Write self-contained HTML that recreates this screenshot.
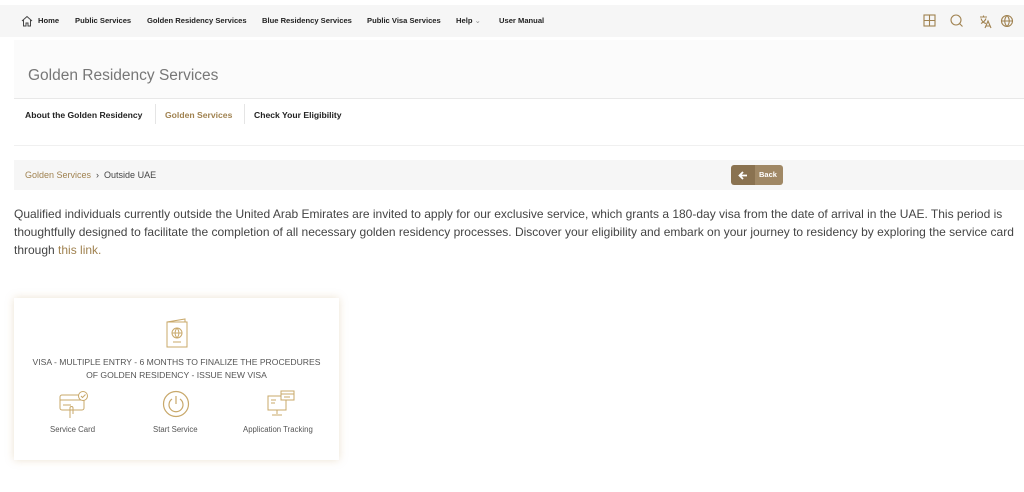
<!DOCTYPE html><html><head><style>
body{margin:0;width:1024px;height:492px;background:#fff;font-family:"Liberation Sans",sans-serif;overflow:hidden;position:relative}
.a{position:absolute}
.nav{left:0;top:5px;width:1024px;height:32px;background:#f6f6f6}
.nav span{position:absolute;top:11px;font-size:7.6px;font-weight:bold;color:#222}
.gold{color:#a08250}
</style></head><body>
<div class="a nav">
<svg class="a" style="left:21px;top:10px" width="12" height="12" viewBox="0 0 12 12" fill="none" stroke="#444" stroke-width="1"><path d="M1 6L6 1.5 11 6M2.5 5v6h2.5V8h2v3h2.5V5"/></svg>
<span style="left:38px">Home</span><span style="left:75px">Public Services</span><span style="left:147px">Golden Residency Services</span><span style="left:262px">Blue Residency Services</span><span style="left:367px">Public Visa Services</span><span style="left:456px">Help <span style="position:static;font-weight:normal;color:#888">⌄</span></span><span style="left:499px">User Manual</span>
<svg class="a" style="left:923px;top:9px" width="90" height="15" viewBox="0 0 90 15" fill="none" stroke="#a08250" stroke-width="1.1"><rect x="1" y="1" width="11" height="11"/><path d="M6.5 1v11M1 6.5h11"/><circle cx="33" cy="6" r="5"/><path d="M36.5 9.5l3 3"/><path d="M57 3h7M60.5 1.5v1.5M58 4.5c1 3 3 4.5 5 5M63 4.5c-1 2.5-3 4-5 5M62 14l3-7 3 7M63 12h4"/><circle cx="84" cy="7" r="5.5"/><path d="M78.5 7h11M84 1.5c-3 3-3 8 0 11M84 1.5c3 3 3 8 0 11"/></svg>
</div>
<div class="a" style="left:14px;top:40px;width:1010px;height:58px;background:#fbfbfb;border-bottom:1px solid #e8e8e8"></div>
<div class="a" style="left:28px;top:67px;font-size:15.5px;color:#777">Golden Residency Services</div>
<div class="a" style="left:25px;top:110px;font-size:8.6px;font-weight:bold;color:#222">About the Golden Residency</div>
<div class="a" style="left:155px;top:104px;width:1px;height:20px;background:#e5e5e5"></div>
<div class="a gold" style="left:165px;top:110px;font-size:8.6px;font-weight:bold">Golden Services</div>
<div class="a" style="left:244px;top:104px;width:1px;height:20px;background:#e5e5e5"></div>
<div class="a" style="left:254px;top:110px;font-size:8.6px;font-weight:bold;color:#222">Check Your Eligibility</div>
<div class="a" style="left:14px;top:145px;width:1010px;height:1px;background:#f0f0f0"></div>
<div class="a" style="left:14px;top:160px;width:1010px;height:30px;background:#f6f6f6"></div>
<div class="a" style="left:25px;top:170px;font-size:9px;color:#444"><span class="gold">Golden Services</span> &nbsp;›&nbsp; Outside UAE</div>
<div class="a" style="left:731px;top:165px;width:52px;height:20px;border-radius:3px;background:linear-gradient(90deg,#8a7250 0 24px,#a08865 24px);color:#fff;font-size:7.5px;font-weight:bold">
<svg class="a" style="left:7px;top:6px" width="10" height="9" viewBox="0 0 10 9" fill="none" stroke="#fff" stroke-width="1.8"><path d="M9 4.5H2M5 1L1.5 4.5 5 8"/></svg>
<span class="a" style="left:28px;top:5px">Back</span></div>
<div class="a" style="left:14px;top:205px;width:1005px;font-size:12px;line-height:18px;color:#444">Qualified individuals currently outside the United Arab Emirates are invited to apply for our exclusive service, which grants a 180-day visa from the date of arrival in the UAE. This period is thoughtfully designed to facilitate the completion of all necessary golden residency processes. Discover your eligibility and embark on your journey to residency by exploring the service card through <span class="gold">this link.</span></div>
<div class="a" style="left:14px;top:298px;width:325px;height:162px;background:#fff;box-shadow:0 0 8px rgba(200,170,120,.35)">
<svg class="a" style="left:150px;top:20px" width="26" height="30" viewBox="0 0 26 30" fill="none" stroke="#c8a86a" stroke-width="1"><path d="M3 4l18-3v3"/><rect x="3" y="4" width="20" height="25"/><circle cx="13" cy="15" r="5"/><path d="M8 15h10M13 10c-2.5 3-2.5 7 0 10M13 10c2.5 3 2.5 7 0 10M9 24h8"/></svg>
<div class="a" style="left:0;top:58px;width:325px;text-align:center;font-size:8.6px;line-height:13px;color:#555">VISA - MULTIPLE ENTRY - 6 MONTHS TO FINALIZE THE PROCEDURES<br>OF GOLDEN RESIDENCY - ISSUE NEW VISA</div>
<svg class="a" style="left:44px;top:92px" width="32" height="30" viewBox="0 0 32 30" fill="none" stroke="#c8a86a" stroke-width="1"><rect x="2" y="5" width="24" height="15" rx="2"/><path d="M2 10h24M5 15h8"/><circle cx="25" cy="6" r="4.5" fill="#fff"/><path d="M23 6l1.5 1.5 3-3M12 28v-10a1.5 1.5 0 0 1 3 0v6"/></svg>
<svg class="a" style="left:148px;top:92px" width="28" height="28" viewBox="0 0 28 28" fill="none" stroke="#c8a86a" stroke-width="1.2"><circle cx="14" cy="14" r="12.5"/><path d="M10 9a7 7 0 1 0 8 0M14 6v8"/></svg>
<svg class="a" style="left:252px;top:92px" width="30" height="28" viewBox="0 0 30 28" fill="none" stroke="#c8a86a" stroke-width="1"><rect x="2" y="6" width="18" height="14"/><path d="M11 20v4M6 25h10M5 10h5M5 13h4"/><rect x="15" y="1" width="13" height="9" fill="#fff"/><path d="M15 4h13M18 7h6"/></svg>
<div class="a" style="left:36px;top:127px;font-size:7.8px;color:#555">Service Card</div>
<div class="a" style="left:139px;top:127px;font-size:7.8px;color:#555">Start Service</div>
<div class="a" style="left:229px;top:127px;font-size:7.8px;color:#555">Application Tracking</div>
</div>
</body></html>
